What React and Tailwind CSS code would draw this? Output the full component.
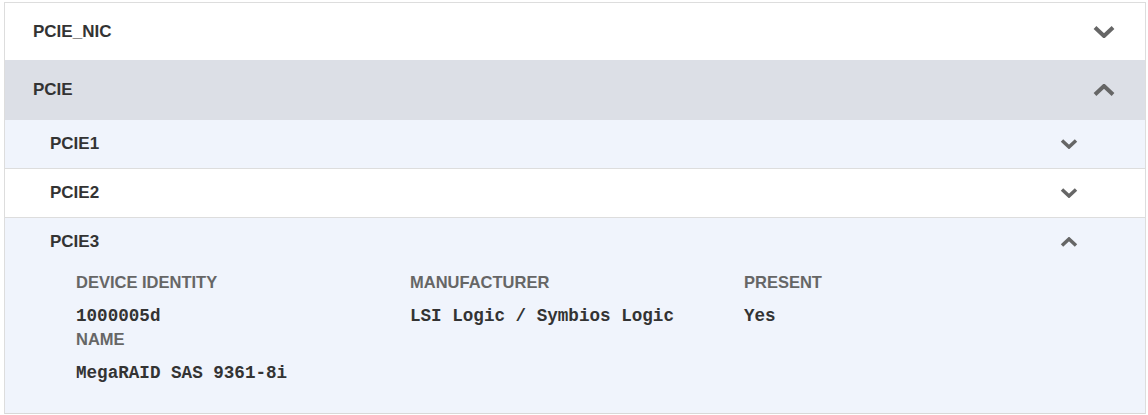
import React from 'react'

function Chevron({ up = false, size = 'lg' }) {
  const w = size === 'lg' ? 22 : 18
  const h = size === 'lg' ? 12 : 10
  const sw = size === 'lg' ? 4 : 3.5
  const pts = up
    ? `2,${h - 1.5} ${w / 2},2 ${w - 2},${h - 1.5}`
    : `2,1.5 ${w / 2},${h - 2} ${w - 2},1.5`
  return (
    <svg width={w} height={h} viewBox={`0 0 ${w} ${h}`} className="shrink-0">
      <polyline points={pts} fill="none" stroke="#666666" strokeWidth={sw} strokeLinejoin="miter" />
    </svg>
  )
}

const fields = [
  { label: 'DEVICE IDENTITY', value: '1000005d' },
  { label: 'MANUFACTURER', value: 'LSI Logic / Symbios Logic' },
  { label: 'PRESENT', value: 'Yes' },
  { label: 'NAME', value: 'MegaRAID SAS 9361-8i' },
]

export default function App() {
  return (
    <div className="w-[1148px] h-[415px] bg-white pt-[2px] pl-[4px] pr-[2px] font-['Liberation_Sans',Arial,sans-serif] text-[#333]">
      <div className="border border-[#dddddd] border-b-[#d8d8d8]">
        {/* Outer: PCIE_NIC */}
        <div className="h-[57px] flex items-center justify-between pl-[28px] pr-[30px] bg-white">
          <span className="text-[17px] font-bold">PCIE_NIC</span>
          <Chevron />
        </div>

        {/* Outer: PCIE (open) */}
        <div className="h-[60px] flex items-center justify-between pl-[28px] pr-[30px] bg-[#dcdfe6]">
          <span className="text-[17px] font-bold">PCIE</span>
          <Chevron up />
        </div>

        {/* Nested slots */}
        <div className="h-[49px] flex items-center justify-between pl-[45px] pr-[67px] bg-[#f0f4fc] border-b border-[#dddddd]">
          <span className="text-[17px] font-bold">PCIE1</span>
          <Chevron size="sm" />
        </div>
        <div className="h-[49px] flex items-center justify-between pl-[45px] pr-[67px] bg-white border-b border-[#dddddd]">
          <span className="text-[17px] font-bold">PCIE2</span>
          <Chevron size="sm" />
        </div>
        <div className="bg-[#f0f4fc]">
          <div className="h-[48px] flex items-center justify-between pl-[45px] pr-[67px]">
            <span className="text-[17px] font-bold">PCIE3</span>
            <Chevron up size="sm" />
          </div>
          <div className="pl-[71px] pt-[6px] pb-[28px]">
            <div className="grid grid-cols-3 w-[1002px] gap-y-[1px]">
              {fields.map(f => (
                <div key={f.label}>
                  <div className="text-[16.5px] leading-[20px] font-bold text-[#666]">{f.label}</div>
                  <div className="mt-[12px] text-[17.6px] leading-[24px] font-bold font-['Liberation_Mono','Courier_New',monospace] text-[#333]">
                    {f.value}
                  </div>
                </div>
              ))}
            </div>
          </div>
        </div>
      </div>
    </div>
  )
}
